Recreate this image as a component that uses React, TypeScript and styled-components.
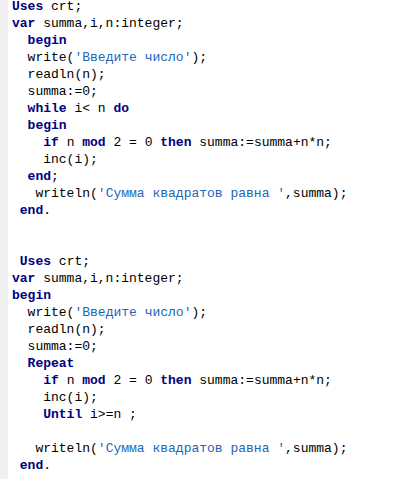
import React from "react";
import styled, { createGlobalStyle } from "styled-components";

const Global = createGlobalStyle`
  html, body { margin: 0; padding: 0; background: #ffffff; }
  body { width: 406px; height: 479px; overflow: hidden; }
`;

const Editor = styled.div`
  display: flex;
  width: 406px;
  height: 479px;
  background: #ffffff;
  overflow: hidden;
`;

const Gutter = styled.div`
  width: 8px;
  flex: none;
  background: #f0f0f0;
`;

const Code = styled.div`
  display: flex;
  flex-direction: column;
  padding: 0 0 0 4px;
  margin-top: -2px;
  font-family: "Liberation Mono", "Courier New", monospace;
  font-size: 13px;
  line-height: 17px;
  color: #000000;
`;

const Line = styled.div`
  white-space: pre;
  height: 17px;
`;

const Kw = styled.span`
  font-weight: bold;
  color: #000080;
`;

const Str = styled.span`
  color: #2166b8;
`;

type Tok = [string, "k" | "s" | "t"];

const k = (t: string): Tok => [t, "k"];
const s = (t: string): Tok => [t, "s"];
const t = (x: string): Tok => [x, "t"];

const lines: Tok[][] = [
  [k("Uses"), t(" crt;")],
  [k("var"), t(" summa,i,n:integer;")],
  [t("  "), k("begin")],
  [t("  write("), s("'Введите число'"), t(");")],
  [t("  readln(n);")],
  [t("  summa:=0;")],
  [t("  "), k("while"), t(" i< n "), k("do")],
  [t("  "), k("begin")],
  [t("    "), k("if"), t(" n "), k("mod"), t(" 2 = 0 "), k("then"), t(" summa:=summa+n*n;")],
  [t("    inc(i);")],
  [t("  "), k("end"), t(";")],
  [t("   writeln("), s("'Сумма квадратов равна '"), t(",summa);")],
  [t(" "), k("end"), t(".")],
  [],
  [],
  [t(" "), k("Uses"), t(" crt;")],
  [k("var"), t(" summa,i,n:integer;")],
  [k("begin")],
  [t("  write("), s("'Введите число'"), t(");")],
  [t("  readln(n);")],
  [t("  summa:=0;")],
  [t("  "), k("Repeat")],
  [t("    "), k("if"), t(" n "), k("mod"), t(" 2 = 0 "), k("then"), t(" summa:=summa+n*n;")],
  [t("    inc(i);")],
  [t("    "), k("Until"), t(" i>=n ;")],
  [],
  [t("   writeln("), s("'Сумма квадратов равна '"), t(",summa);")],
  [t(" "), k("end"), t(".")],
];

export default function App() {
  return (
    <>
      <Global />
      <Editor>
        <Gutter />
        <Code>
          {lines.map((toks, i) => (
            <Line key={i}>
              {toks.length === 0
                ? " "
                : toks.map(([text, kind], j) =>
                    kind === "k" ? (
                      <Kw key={j}>{text}</Kw>
                    ) : kind === "s" ? (
                      <Str key={j}>{text}</Str>
                    ) : (
                      <React.Fragment key={j}>{text}</React.Fragment>
                    )
                  )}
            </Line>
          ))}
        </Code>
      </Editor>
    </>
  );
}
